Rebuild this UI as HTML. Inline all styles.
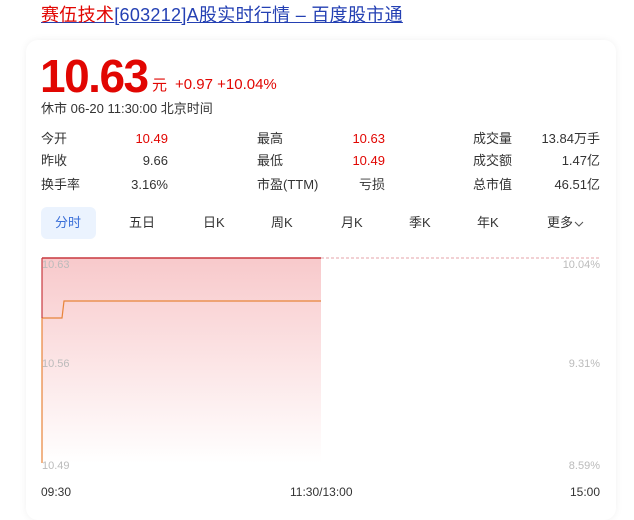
<!DOCTYPE html>
<html><head><meta charset="utf-8"><style>
body{margin:0;width:634px;height:502px;background:#fff;font-family:"Liberation Sans","Noto Sans CJK SC",sans-serif;position:relative;overflow:hidden}
.a{position:absolute;white-space:nowrap;line-height:18px}
.card{position:absolute;left:26px;top:40px;width:590px;height:480px;border-radius:12px;box-shadow:0 0 8px rgba(0,0,0,.06);background:#fff}
.lab{font-size:13px;color:#333}
.v{font-size:13px;text-align:right}
.r{color:#e10602}
.tab{font-size:13px;color:#333;top:214px}
.ax{font-size:11px;color:#bbb}
</style></head><body>
<div class="a" style="left:41px;top:6px;font-size:18px;color:#2440b3;text-decoration:underline;letter-spacing:0.3px"><span style="color:#e10602">赛伍技术</span>[603212]A股实时行情 – 百度股市通</div>
<div class="card"></div>
<div class="a r" style="left:40px;top:53px;font-size:46px;line-height:46px;font-weight:bold;letter-spacing:-1.5px">10.63</div>
<div class="a r" style="left:152px;top:77px;font-size:15px">元</div>
<div class="a r" style="left:175px;top:76px;font-size:15px">+0.97 +10.04%</div>
<div class="a" style="left:41px;top:100px;font-size:13px;color:#333">休市 06-20 11:30:00 北京时间</div>

<div class="a lab" style="left:41px;top:130px">今开</div><div class="a v r" style="left:100px;width:68px;top:130px">10.49</div>
<div class="a lab" style="left:41px;top:152px">昨收</div><div class="a v" style="left:100px;width:68px;top:152px;color:#333">9.66</div>
<div class="a lab" style="left:41px;top:176px">换手率</div><div class="a v" style="left:100px;width:68px;top:176px;color:#333">3.16%</div>
<div class="a lab" style="left:257px;top:130px">最高</div><div class="a v r" style="left:310px;width:75px;top:130px">10.63</div>
<div class="a lab" style="left:257px;top:152px">最低</div><div class="a v r" style="left:310px;width:75px;top:152px">10.49</div>
<div class="a lab" style="left:257px;top:176px">市盈(TTM)</div><div class="a v" style="left:330px;width:55px;top:176px;color:#333">亏损</div>
<div class="a lab" style="left:473px;top:130px">成交量</div><div class="a v" style="left:520px;width:80px;top:130px;color:#333">13.84万手</div>
<div class="a lab" style="left:473px;top:152px">成交额</div><div class="a v" style="left:520px;width:80px;top:152px;color:#333">1.47亿</div>
<div class="a lab" style="left:473px;top:176px">总市值</div><div class="a v" style="left:520px;width:80px;top:176px;color:#333">46.51亿</div>

<div class="a" style="left:41px;top:207px;width:55px;height:32px;background:#ebf3fe;border-radius:6px"></div>
<div class="a tab" style="left:55px;color:#3a6fd8">分时</div>
<div class="a tab" style="left:129px">五日</div>
<div class="a tab" style="left:203px">日K</div>
<div class="a tab" style="left:271px">周K</div>
<div class="a tab" style="left:341px">月K</div>
<div class="a tab" style="left:409px">季K</div>
<div class="a tab" style="left:477px">年K</div>
<div class="a tab" style="left:547px">更多</div>
<svg class="a" style="left:574px;top:220px" width="10" height="8"><polyline points="1,2 5,6 9,2" fill="none" stroke="#555" stroke-width="1"/></svg>

<svg class="a" style="left:0;top:0" width="634" height="502">
<defs><linearGradient id="g" x1="0" y1="0" x2="0" y2="1"><stop offset="0" stop-color="#f8c9cb"/><stop offset="1" stop-color="#fff" stop-opacity="1"/></linearGradient></defs>
<rect x="42" y="258" width="279" height="205" fill="url(#g)"/>
<line x1="321" y1="258" x2="600" y2="258" stroke="#e5a3a8" stroke-dasharray="3,2"/>
<line x1="42" y1="258" x2="321" y2="258" stroke="#c8383f" stroke-width="1.5"/>
<polyline points="42,463 42,318 62,318 64,301 321,301" fill="none" stroke="#e8843a" stroke-width="1.2"/>
<line x1="42" y1="258" x2="42" y2="318" stroke="#c8383f" stroke-width="1.2"/>
</svg>
<div class="a ax" style="left:42px;top:256px">10.63</div>
<div class="a ax" style="left:42px;top:355px">10.56</div>
<div class="a ax" style="left:42px;top:457px">10.49</div>
<div class="a ax" style="left:540px;width:60px;text-align:right;top:256px">10.04%</div>
<div class="a ax" style="left:540px;width:60px;text-align:right;top:355px">9.31%</div>
<div class="a ax" style="left:540px;width:60px;text-align:right;top:457px">8.59%</div>
<div class="a" style="left:41px;top:483px;font-size:12px;color:#333">09:30</div>
<div class="a" style="left:290px;top:483px;font-size:12px;color:#333">11:30/13:00</div>
<div class="a" style="left:570px;top:483px;font-size:12px;color:#333">15:00</div>
</body></html>
